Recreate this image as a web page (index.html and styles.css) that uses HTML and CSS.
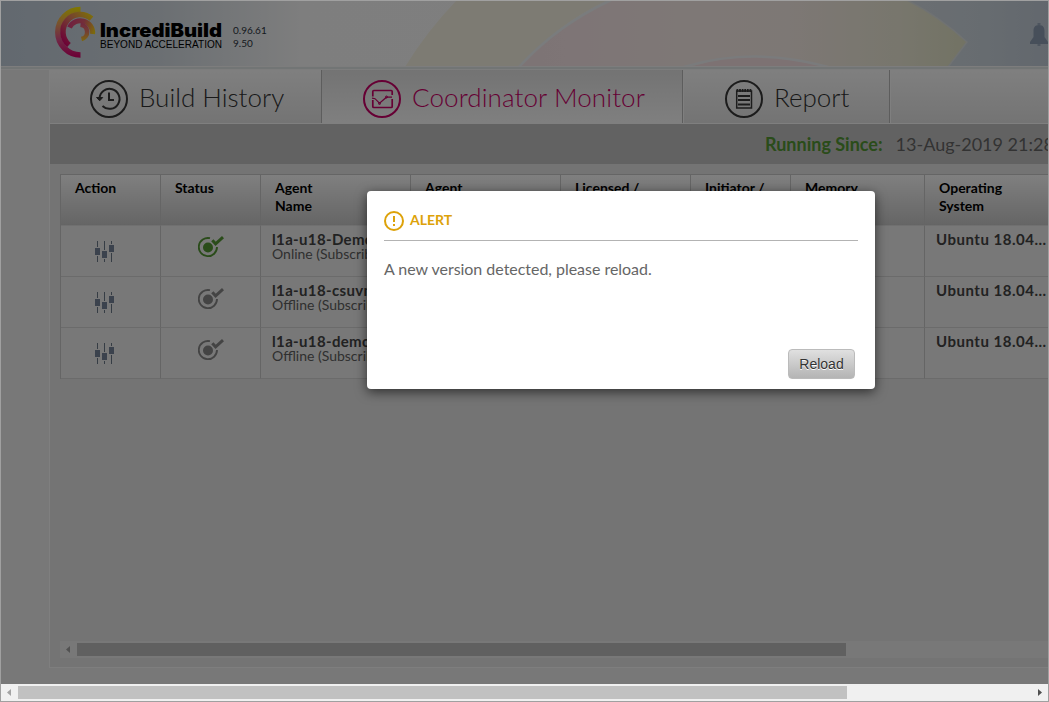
FILE: index.html
```html
<!DOCTYPE html>
<html lang="en">
<head>
<meta charset="utf-8">
<title>IncrediBuild Coordinator Monitor</title>
<link rel="stylesheet" href="styles.css">
</head>
<body>
<svg class="defs" width="0" height="0">
  <symbol id="sliders" viewBox="0 0 20 22">
    <path d="M2.500 0v6M2.500 15v6M9.500 0v9M9.500 18v3M16.500 0v3M16.500 12v9" stroke="#6c7a8a" stroke-width="1" fill="none"/>
    <path d="M0 7h5v7h-5zM7 10h5v7h-5zM14 4h5v7h-5z" fill="#77849a"/>
  </symbol>
  <symbol id="agent" viewBox="0 0 26 22">
    <circle cx="10" cy="11.500" r="5" fill="currentColor"/>
    <path d="M12 2.200A9.100 9.100 0 1 0 19 11" fill="none" stroke="currentColor" stroke-width="1.900"/>
    <path d="M14.300 4.200L17.600 7.800L25 1.200" fill="none" stroke="currentColor" stroke-width="3"/>
  </symbol>
</svg>
<div class="window">
  <div class="page">
    <header class="header">
      <svg class="banner" width="1047" height="65" viewBox="1 1 1047 65">
        <defs>
          <linearGradient id="sky" x1="0" x2="1">
            <stop offset="0" stop-color="#c5d2df"/><stop offset=".15" stop-color="#d6dee5"/><stop offset=".29" stop-color="#fdfdfd"/><stop offset="1" stop-color="#fff"/>
          </linearGradient>
          <linearGradient id="skyRight" x1="0" x2="1">
            <stop offset="0" stop-color="#d8dee6"/><stop offset=".6" stop-color="#cfd9e1"/><stop offset="1" stop-color="#c5cfdb"/>
          </linearGradient>
          <linearGradient id="petal" x1="0" x2="1">
            <stop offset="0" stop-color="#fae8ea"/><stop offset=".15" stop-color="#fdebed"/><stop offset=".35" stop-color="#fdf0ed"/><stop offset=".6" stop-color="#fbf0ea"/><stop offset=".85" stop-color="#f0edda"/><stop offset="1" stop-color="#e5e6c8"/>
          </linearGradient>
          <linearGradient id="ringOuter" gradientUnits="userSpaceOnUse" x1="75" y1="7" x2="75" y2="57">
            <stop offset="0" stop-color="#fff000"/><stop offset=".35" stop-color="#f0a060"/><stop offset=".65" stop-color="#e2508c"/><stop offset="1" stop-color="#d8006c"/>
          </linearGradient>
          <linearGradient id="ringMid" gradientUnits="userSpaceOnUse" x1="92" y1="14" x2="62" y2="42">
            <stop offset="0" stop-color="#fbe010"/><stop offset=".45" stop-color="#ea8064"/><stop offset="1" stop-color="#d8006c"/>
          </linearGradient>
          <linearGradient id="ringCore" gradientUnits="userSpaceOnUse" x1="68" y1="24" x2="95" y2="34">
            <stop offset="0" stop-color="#e03c80"/><stop offset=".5" stop-color="#e66070"/><stop offset="1" stop-color="#fbe010"/>
          </linearGradient>
          <linearGradient id="ringInner" gradientUnits="userSpaceOnUse" x1="81" y1="22" x2="81" y2="42">
            <stop offset="0" stop-color="#e04c80"/><stop offset=".5" stop-color="#ea8064"/><stop offset="1" stop-color="#fbd818"/>
          </linearGradient>
        </defs>
        <path d="M0 0H1049V67H0z" fill="url(#sky)"/>
        <path d="M880 0H1049V67H900z" fill="url(#skyRight)"/>
        <path d="M457 0Q427 31 405 67H520Q555 25 608 0z" fill="#fbf7e6"/>
        <path d="M608 0Q556 26 520 67H948L967 42Q940 17 907 0z" fill="url(#petal)"/>
        <path d="M611 0Q556 26 519 67" fill="none" stroke="#f4f8fa" stroke-width="2.500"/>
        <path d="M907 0Q940 17 967 42L948 67" fill="none" stroke="#e0e5e5" stroke-width="1.500"/>
        <path d="M690 67Q752 47 823 67z" fill="#fae4e6"/>
        <path d="M684 67Q752 46 828 67" fill="none" stroke="#f5f6f8" stroke-width="2.500"/>
        <g fill="none">
          <path d="M80.500 9.500A22.700 22.700 0 0 0 80.500 54.900" stroke="url(#ringOuter)" stroke-width="5.500"/>
          <path d="M91.500 18.700A17.300 17.300 0 0 0 69 45" stroke="url(#ringMid)" stroke-width="5.500"/>
          <path d="M92.600 34A12.200 12.200 0 0 0 69.500 27.500" stroke="url(#ringCore)" stroke-width="5"/>
          <path d="M80.500 24.800A7.200 7.200 0 0 1 81.500 39" stroke="url(#ringInner)" stroke-width="4.500"/>
        </g>
        <text class="brand" x="100" y="37" textLength="122" lengthAdjust="spacingAndGlyphs">IncrediBuild</text>
        <text class="motto" x="100" y="48" textLength="122" lengthAdjust="spacingAndGlyphs">BEYOND ACCELERATION</text>
        <path d="M1039 25c4.500 0 5.500 3 5.500 6v6l3.500 5v2h-18v-2l3.500-5v-6c0-3 1-6 5.500-6z" fill="#8e9fb5"/>
        <path d="M1037.500 24h3M1037.500 45h3" stroke="#8e9fb5" stroke-width="1.500"/>
      </svg>
      <div class="version">0.96.61<br>9.50</div>
    </header>
    <main class="panel">
      <nav class="tabs">
        <div class="tab history">
          <svg class="tab-icon" viewBox="0 0 38 38" fill="none" stroke="#383838" stroke-width="2">
            <circle cx="19" cy="19" r="18"/><path d="M9.500 18.500A10 10 0 1 1 12.500 26M19 12.500v7.500h5"/><path d="M6.500 17.500l3.200 3.300 3-3.300z" fill="#383838" stroke-width="1"/>
          </svg><span>Build History</span>
        </div>
        <div class="tab monitor">
          <svg class="tab-icon" viewBox="0 0 38 38" fill="none" stroke="#cc0069" stroke-width="2">
            <circle cx="19" cy="19" r="18"/><path d="M9.800 16.500V11.500q0-1 1-1h17.400q1 0 1 1V15M9.800 20v6.500q0 1 1 1h17.400q1 0 1-1V19" stroke-width="1.700"/><path d="M9 18.200l3 .5 4.500 4.500 7-6H29" stroke-width="1.200"/><circle cx="16.500" cy="23.500" r="1" stroke-width="1"/><circle cx="23.500" cy="17" r="1" stroke-width="1"/>
          </svg><span>Coordinator Monitor</span>
        </div>
        <div class="tab report">
          <svg class="tab-icon" viewBox="0 0 38 38" fill="none" stroke="#383838" stroke-width="2">
            <circle cx="19" cy="19" r="18"/><path d="M11.700 11v17h14.800V11z" stroke-width="1.500"/><path d="M11.500 10.500h15" stroke-dasharray="1.800 .8" stroke-width="3"/><path d="M13 16h12M13 20h12M13 24.500h12"/>
          </svg><span>Report</span>
        </div>
      </nav>
      <div class="info"><b>Running Since:</b><span>13-Aug-2019 21:28</span></div>
      <div class="grid">
        <div class="row head">
          <div>Action</div><div>Status</div><div>Agent<br>Name</div><div>Agent</div><div>Licensed /</div><div>Initiator /</div><div>Memory</div><div>Operating<br>System</div>
        </div>
        <div class="row">
          <div class="icon-cell"><svg class="sliders"><use href="#sliders"/></svg></div>
          <div class="icon-cell"><svg class="agent online"><use href="#agent"/></svg></div>
          <div class="name"><b>l1a-u18-Demo</b><span>Online (Subscribed)</span></div>
          <div></div><div></div><div></div><div></div><div class="os">Ubuntu 18.04...</div>
        </div>
        <div class="row">
          <div class="icon-cell"><svg class="sliders"><use href="#sliders"/></svg></div>
          <div class="icon-cell"><svg class="agent"><use href="#agent"/></svg></div>
          <div class="name"><b>l1a-u18-csuvm</b><span>Offline (Subscribed)</span></div>
          <div></div><div></div><div></div><div></div><div class="os">Ubuntu 18.04...</div>
        </div>
        <div class="row">
          <div class="icon-cell"><svg class="sliders"><use href="#sliders"/></svg></div>
          <div class="icon-cell"><svg class="agent"><use href="#agent"/></svg></div>
          <div class="name"><b>l1a-u18-demo</b><span>Offline (Subscribed)</span></div>
          <div></div><div></div><div></div><div></div><div class="os">Ubuntu 18.04...</div>
        </div>
      </div>
      <div class="scroll inner"><i class="arrow left"></i><i class="thumb"></i></div>
    </main>
    <div class="overlay"></div>
  </div>
  <div class="scroll outer"><i class="arrow left"></i><i class="thumb"></i><i class="arrow right"></i></div>
  <section class="dialog">
    <h2><svg width="20" height="20" viewBox="0 0 20 20" fill="none" stroke="#dda20a" stroke-width="2"><circle cx="10" cy="10" r="9"/><path d="M10 5v6M10 13v2"/></svg><span>ALERT</span></h2>
    <p>A new version detected, please reload.</p>
    <button>Reload</button>
  </section>
</div>
</body>
</html>
```
FILE: styles.css
```css
* { box-sizing: border-box; }
body { margin: 0; font-family: Lato, sans-serif; overflow: hidden; }
.defs { position: absolute; }
.window { position: relative; width: 1049px; height: 702px; border: 1px solid #a0a0a0; display: flex; flex-direction: column; overflow: hidden; }
.page { position: relative; height: 683px; background: #f0f0f0; overflow: hidden; display: flex; flex-direction: column; }
.overlay { position: absolute; inset: 0; background: rgba(0, 0, 0, .5); }

.header { position: relative; height: 69px; flex: none; background: #e5ebeb; border-bottom: 1px solid #fafafa; }
.banner { display: block; border-bottom: 1px solid #fafafa; height: 66px; }
.brand { font: 900 18.500px Inter, "Liberation Sans", sans-serif; }
.motto { font: 10.600px "Liberation Sans", sans-serif; }
.version { position: absolute; left: 232px; top: 23px; font-size: 10px; line-height: 13px; color: #2c3440; }

.panel { margin-left: 48px; width: 999px; height: 598px; flex: none; border-left: 1px solid #fff; border-bottom: 1px solid #fcfcfc; background: #e9e9e9; }
.tabs { display: flex; height: 54px; border-bottom: 1px solid #fff; background: linear-gradient(#fff, #e8e8e8); }
.tab { display: flex; align-items: center; height: 53px; border-right: 1px solid #bbb; box-shadow: 1px 0 #fff; font-size: 26px; font-weight: 300; color: #333; white-space: nowrap; }
.tab-icon { width: 38px; height: 38px; margin-top: 4px; margin-right: 11px; flex: none; overflow: visible; }
.tab span { line-height: 30px; }
.history { width: 272px; padding-left: 40px; }
.monitor { width: 361px; padding-left: 41px; color: #cc0069; background: linear-gradient(#e7e7e7, #fff); letter-spacing: .1px; }
.report { width: 207px; padding-left: 42px; }
.info { height: 40px; background: #c5c5c5; padding-left: 715px; font-size: 18px; line-height: 40px; color: #666; white-space: nowrap; overflow: hidden; }
.info b { color: #549834; margin-right: 13px; }

.grid { margin: 10px 0 0 10px; border-top: 1px solid #cbcbcb; border-left: 1px solid #cbcbcb; height: 205px; width: 1000px; color: #444; }
.row { display: grid; grid-template-columns: 99px 100px 150px 150px 130px 100px 134px 136px; height: 51px; background: #f1f1f1; }
.row > div { border-right: 1px solid #cacaca; border-bottom: 1px solid #d6d6d6; overflow: hidden; white-space: nowrap; }
.row { grid-template-columns: 100px 100px 150px 150px 130px 100px 134px 136px; }
.head { background: linear-gradient(#fff, #ccc 96%, #c4c4c4); color: #000; font-size: 14px; font-weight: 700; line-height: 18px; }
.head > div { padding: 4px 0 0 14px; border-bottom-color: #e0e0e0; }
.icon-cell { display: flex; padding-left: 34px; padding-top: 15px; }
.sliders { width: 20px; height: 22px; }
.agent { width: 26px; height: 22px; margin: -4px 0 0 3px; color: #888; }
.online { margin-top: -5px; color: #549834; }
.name { padding: 6px 0 0 11px; display: flex; flex-direction: column; font-size: 14px; line-height: 14px; color: #606060; }
.name b { font-size: 15px; line-height: 15px; color: #444; letter-spacing: .35px; }
.row > .os { padding: 5px 0 0 11px; font-size: 15px; line-height: 16px; font-weight: 700; letter-spacing: .5px; }

.scroll { position: relative; display: flex; align-items: center; height: 17px; background: #f0f0f0; }
.inner { margin: 262px 0 0 10px; }
.thumb { height: 13px; background: #c1c1c1; }
.inner .thumb { width: 769px; margin-left: 7px; }
.outer { flex: none; }
.outer .thumb { width: 829px; margin-left: 7px; }
.arrow { width: 4px; height: 7px; background: #a3a3a3; }
.left { clip-path: polygon(0 50%, 100% 0, 100% 100%); margin-left: 6px; }
.right { clip-path: polygon(0 0, 100% 50%, 0 100%); margin-left: 191px; background: #505050; }

.dialog { position: absolute; left: 366px; top: 190px; width: 508px; height: 198px; padding: 17px; border-radius: 4px; background: #fff; box-shadow: 0 3px 12px rgba(0, 0, 0, .6); display: flex; flex-direction: column; }
.dialog h2 { margin: 0; height: 33px; padding-top: 3px; border-bottom: 1px solid #b3b3b3; display: flex; gap: 6px; font-size: 14px; line-height: 17px; font-weight: 700; color: #dda20a; }
.dialog p { margin: 17px 0 0; font-size: 16px; line-height: 22px; color: #666; letter-spacing: -.03px; }
.dialog button { width: 67px; height: 30px; margin: auto 3px -7px auto; padding: 0; border: 1px solid #bbb; border-radius: 4px; background: linear-gradient(#e0e0e0, #b4b4b4); font: 14px "Liberation Sans", sans-serif; color: #333; text-shadow: 0 1px #fff; }
```
